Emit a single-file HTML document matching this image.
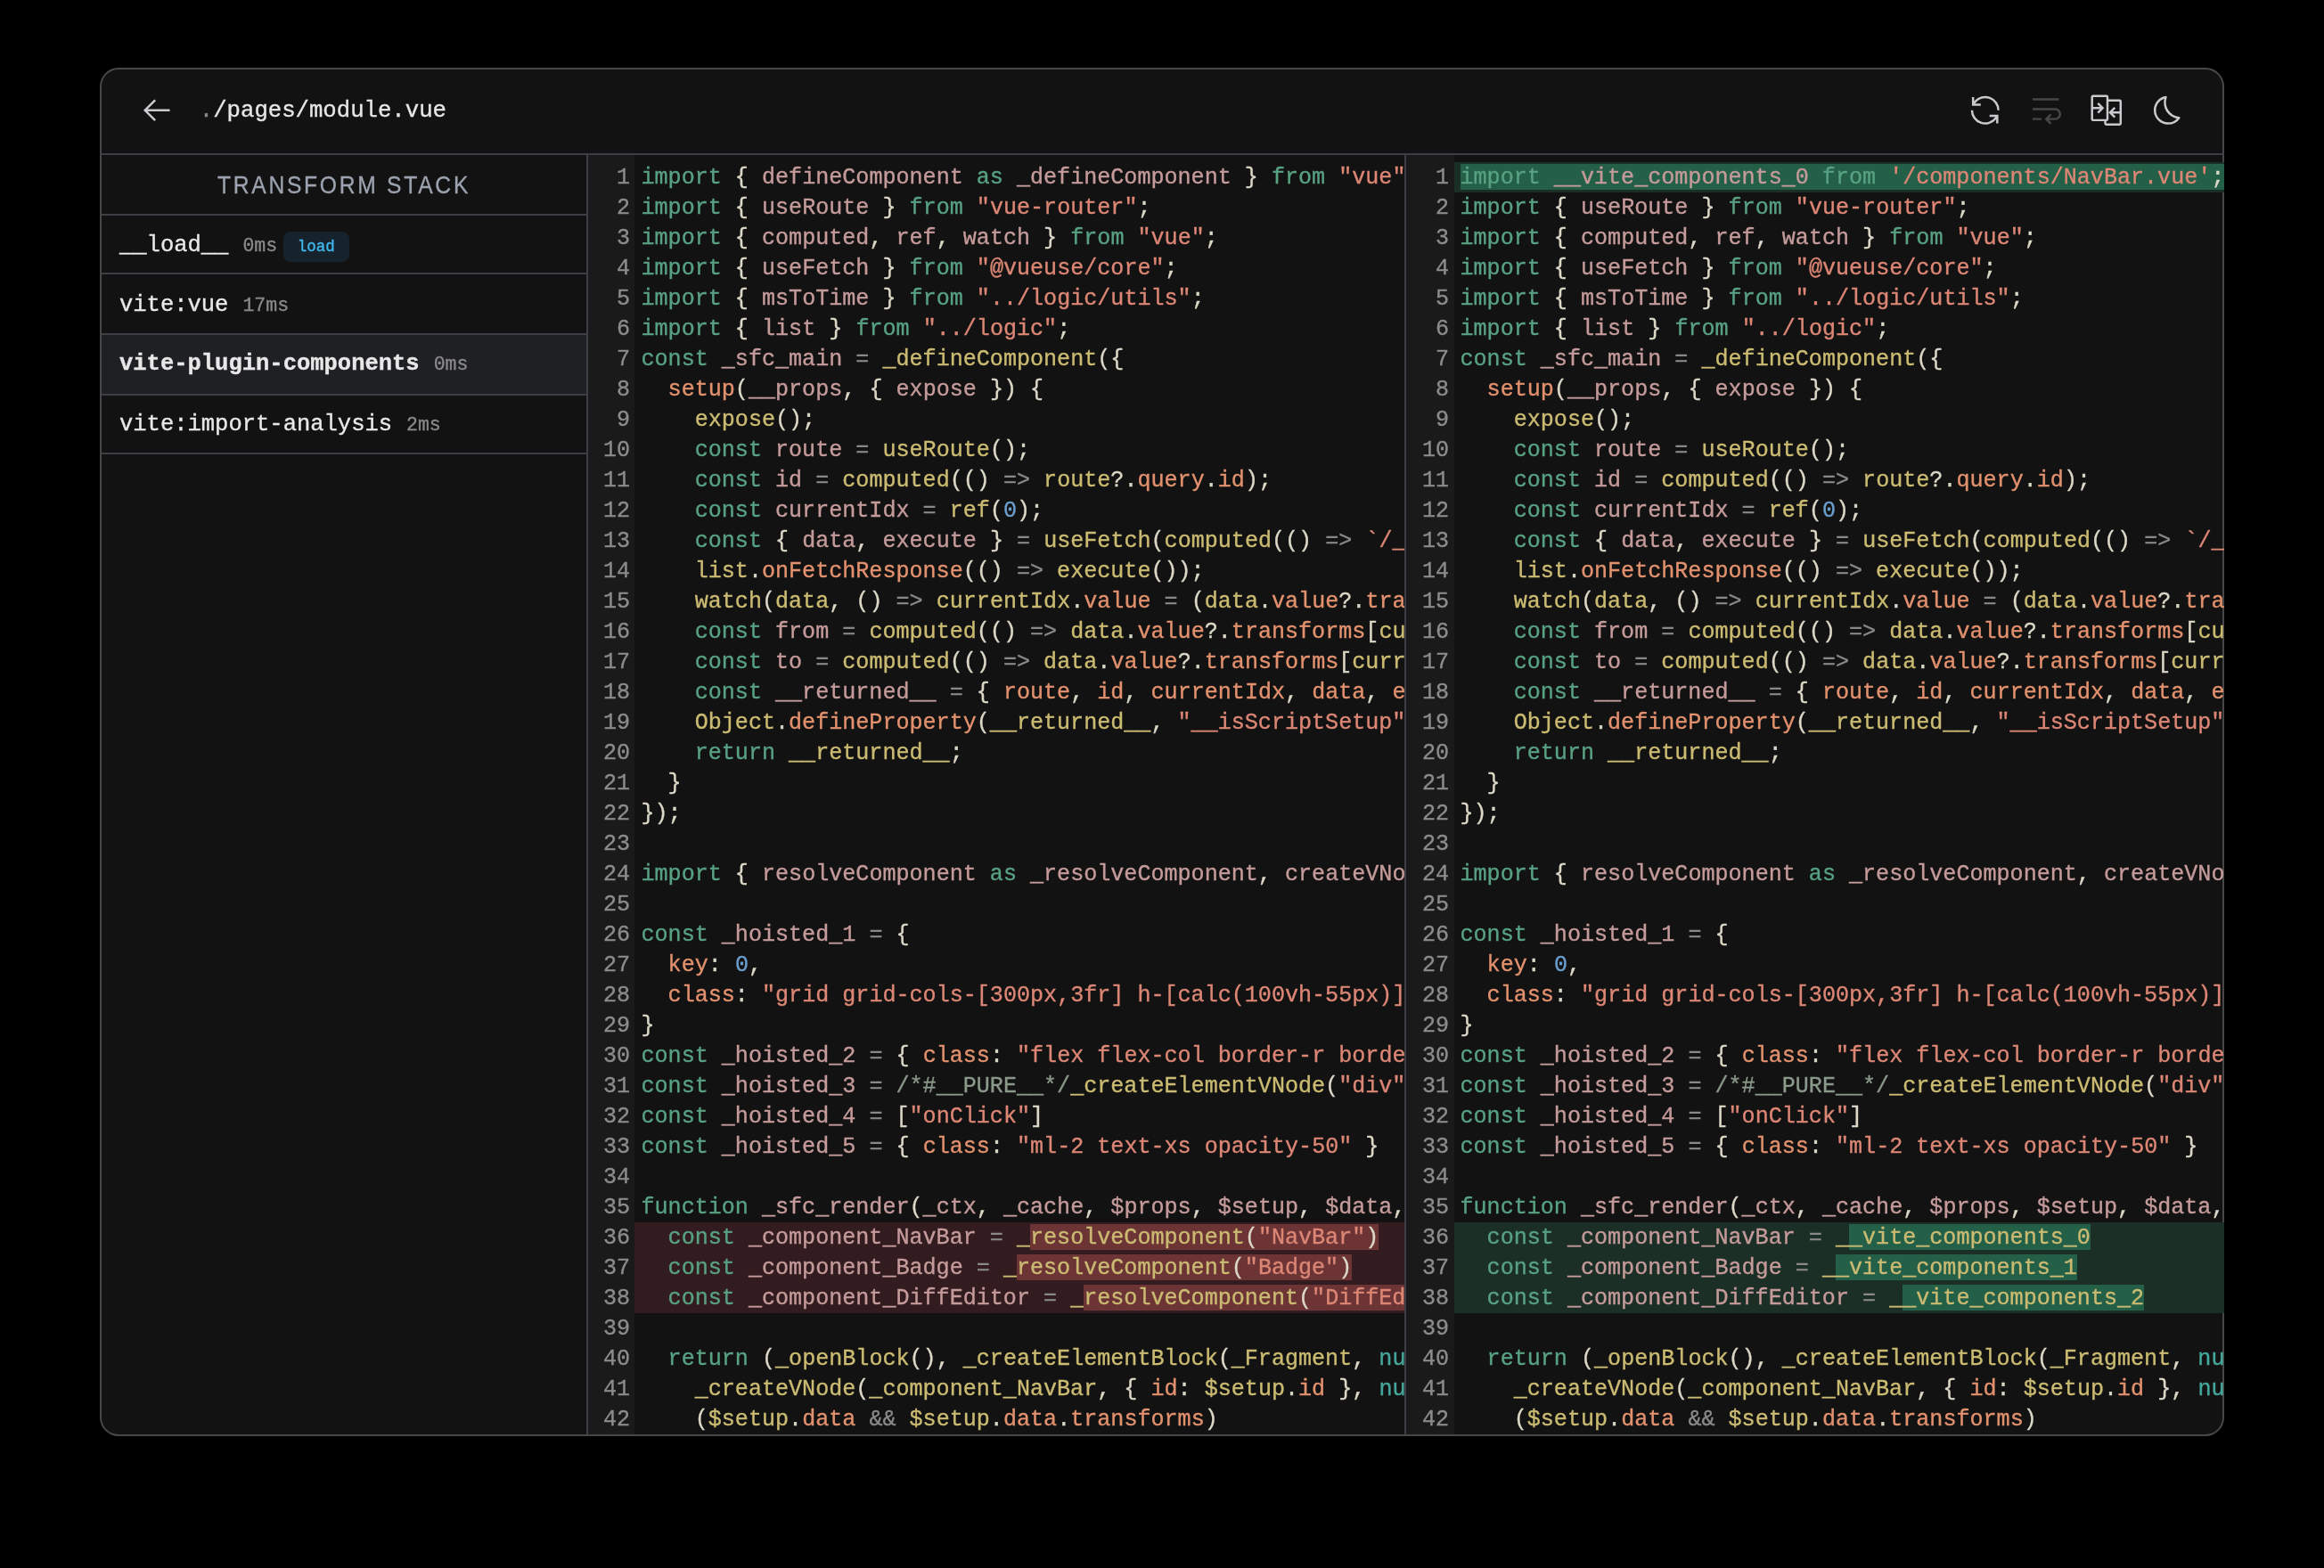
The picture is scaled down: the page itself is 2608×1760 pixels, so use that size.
<!DOCTYPE html>
<html><head><meta charset="utf-8"><title>vite-plugin-inspect</title>
<style>
html,body{margin:0;padding:0;background:#000;width:2608px;height:1760px;overflow:hidden}
body{position:relative;font-family:"Liberation Mono",monospace}
.win{position:absolute;left:112px;top:76px;width:2384px;height:1536px;border-radius:21px;overflow:hidden;background:#121212;box-shadow:inset 0 0 0 2px #474747}
.hdr{position:absolute;left:0;top:0;width:2384px;height:96px}
.ic{position:absolute;width:39.5px;height:39.5px;fill:#c9cacd;top:27.8px}
.back{left:44.4px;top:28.1px}
.i1{left:2095.7px}.i2{left:2164px;fill:#474747}.i3{left:2231.9px}.i4{left:2299.8px}
.path{position:absolute;left:111.8px;top:32.2px;font-size:25.67px;line-height:34px;color:#e6e6e6;white-space:pre}
.dim{color:#8a8a8a}
.hline{position:absolute;left:0;top:96px;width:2384px;height:2px;background:#3b3e43}
.vline{position:absolute;top:98px;width:2px;height:1436px;background:#3b3e43}
.side{position:absolute;left:2px;top:98px;width:544px;height:1436px}
.stitle{position:absolute;left:0;width:544px;text-align:center;top:16.5px;font-family:"Liberation Sans",sans-serif;font-size:28px;line-height:34px;color:#9ca3af;letter-spacing:3.1px;text-indent:0px;transform:scaleX(0.88);-webkit-text-stroke:0.35px currentColor}
.sl{position:absolute;left:0;width:544px;height:2px;background:#3b3e43}
.row{position:absolute;left:20px;white-space:pre;font-size:25.5px;line-height:34px;color:#e8e8e8}

.selbg{position:absolute;left:0;width:544px;background:#1f2023}
.r1{top:84.7px}.r2{top:151.8px}.r3{top:218.2px}.r4{top:285.6px}
.b{font-weight:bold}
.ms{font-size:21.5px;color:#8a8a8a;margin-left:16px}
.badge{display:inline-block;margin-left:6.5px;height:34px;line-height:34px;padding:0 16px;border-radius:8px;background:#17232c;color:#3fb8ec;font-size:17.5px;vertical-align:baseline}
.pane{position:absolute;top:98px;height:1436px;overflow:hidden}
.pl{left:548px;width:916px}
.pr{left:1466px;width:918px}
.gut{position:absolute;left:0;top:0;height:1436px;background:#1a1a1a;padding-top:9px;box-sizing:border-box;text-align:right;color:#8c8c8c;font-size:25.08px;line-height:34px}
.pl .gut{width:52px;padding-right:5px}
.pr .gut{width:54px;padding-right:6px}
.code{position:absolute;top:8px;right:0;font-size:25.08px;line-height:34px;white-space:pre;color:#dcd8c8}
.pl .code{left:52px}
.pr .code{left:54px}
.ln{height:34px;box-sizing:border-box;padding-top:1px;padding-left:7.5px;overflow:hidden}
.pr .ln{padding-left:6.5px}
.ln i{font-style:normal}
.del{background:#321c1f}
.add{background:#1b2f26}
.del .h{background:linear-gradient(#6d3436,#6d3436) 0 0/100% 29px no-repeat;padding-top:1px}
.add .h{background:linear-gradient(#245f48,#245f48) 0 0/100% 29px no-repeat;padding-top:1px}
.k{color:#58a183}
.d{color:#c49a9a}
.v{color:#cbbb72}
.r{color:#e2916e}
.s{color:#dc8675}
.n{color:#6b9fcf}
.o{color:#8a8a8a}
.p{color:#dcd8c8}
.c{color:#8a998a}
.a{color:#45a79b}
.code,.gut,.path,.row{-webkit-text-stroke:0.35px currentColor}
.win{will-change:transform}

</style></head>
<body>
<div class="win">
  <div class="hdr">
    <svg class="ic back" viewBox="0 0 32 32"><path d="M14 26l1.41-1.41L7.83 17H28v-2H7.83l7.58-7.59L14 6L4 16l10 10z"/></svg>
    <div class="path"><span class="dim">.</span>/pages/module.vue</div>
    <svg class="ic i1" viewBox="0 0 32 32"><path d="M12 10H6.78A11 11 0 0 1 27 16h2A13 13 0 0 0 6 7.68V4H4v8h8zm8 12h5.22A11 11 0 0 1 5 16H3a13 13 0 0 0 23 8.32V28h2v-8h-8z"/></svg>
    <svg class="ic i2" viewBox="0 0 32 32"><path d="M4 5h24v2H4zM4 23h8v2H4zM24.5 14H4v2h20.5a3.5 3.5 0 0 1 0 7h-5.67l2.58-2.59L20 19l-5 5l5 5l1.41-1.41L18.83 25h5.67a5.5 5.5 0 0 0 0-11z"/></svg>
    <svg class="ic i3" viewBox="0 0 32 32"><path d="M28 6H18V4a2 2 0 0 0-2-2H4a2 2 0 0 0-2 2v20a2 2 0 0 0 2 2h10v2a2 2 0 0 0 2 2h12a2 2 0 0 0 2-2V8a2 2 0 0 0-2-2zM4 15h6.17l-2.58 2.59L9 19l5-5l-5-5l-1.41 1.41L10.17 13H4V4h12v20H4zm12 13v-2a2 2 0 0 0 2-2V8h10v9h-6.17l2.58-2.59L23 13l-5 5l5 5l1.41-1.41L21.83 19H28v9z"/></svg>
    <svg class="ic i4" viewBox="0 0 32 32"><path d="M13.502 5.414a15.075 15.075 0 0 0 11.594 18.194a11.113 11.113 0 0 1-7.975 3.39c-.138 0-.278.005-.418 0a11.094 11.094 0 0 1-3.2-21.584M14.98 3a1.002 1.002 0 0 0-.175.016a13.096 13.096 0 0 0 1.825 25.981c.164.006.328 0 .49 0a13.072 13.072 0 0 0 10.703-5.555a1.01 1.01 0 0 0-.783-1.565A13.08 13.08 0 0 1 15.89 4.38A1.015 1.015 0 0 0 14.98 3z"/></svg>
  </div>
  <div class="hline"></div>
  <div class="side">
    <div class="stitle">TRANSFORM STACK</div>
    <div class="sl" style="top:66px"></div>
    <div class="row r1"><span class="nm">__load__</span><span class="ms">0ms</span><span class="badge">load</span></div>
    <div class="sl" style="top:132px"></div>
    <div class="row r2"><span class="nm">vite:vue</span><span class="ms">17ms</span></div>
    <div class="selbg" style="top:202px;height:66px"></div>
    <div class="sl" style="top:200px"></div>
    <div class="row r3 sel"><span class="nm b">vite-plugin-components</span><span class="ms">0ms</span></div>
    <div class="sl" style="top:268px"></div>
    <div class="row r4"><span class="nm">vite:import-analysis</span><span class="ms">2ms</span></div>
    <div class="sl" style="top:334px"></div>
  </div>
  <div class="vline" style="left:546px"></div>
  <div class="pane pl">
    <div class="gut"><div>1</div><div>2</div><div>3</div><div>4</div><div>5</div><div>6</div><div>7</div><div>8</div><div>9</div><div>10</div><div>11</div><div>12</div><div>13</div><div>14</div><div>15</div><div>16</div><div>17</div><div>18</div><div>19</div><div>20</div><div>21</div><div>22</div><div>23</div><div>24</div><div>25</div><div>26</div><div>27</div><div>28</div><div>29</div><div>30</div><div>31</div><div>32</div><div>33</div><div>34</div><div>35</div><div>36</div><div>37</div><div>38</div><div>39</div><div>40</div><div>41</div><div>42</div></div>
    <div class="code"><div class="ln"><i class="k">import</i> <i class="p">{</i> <i class="d">defineComponent</i> <i class="k">as</i> <i class="d">_defineComponent</i> <i class="p">}</i> <i class="k">from</i> <i class="s">"vue"</i><i class="p">;</i></div><div class="ln"><i class="k">import</i> <i class="p">{</i> <i class="d">useRoute</i> <i class="p">}</i> <i class="k">from</i> <i class="s">"vue-router"</i><i class="p">;</i></div><div class="ln"><i class="k">import</i> <i class="p">{</i> <i class="d">computed</i><i class="p">,</i> <i class="d">ref</i><i class="p">,</i> <i class="d">watch</i> <i class="p">}</i> <i class="k">from</i> <i class="s">"vue"</i><i class="p">;</i></div><div class="ln"><i class="k">import</i> <i class="p">{</i> <i class="d">useFetch</i> <i class="p">}</i> <i class="k">from</i> <i class="s">"@vueuse/core"</i><i class="p">;</i></div><div class="ln"><i class="k">import</i> <i class="p">{</i> <i class="d">msToTime</i> <i class="p">}</i> <i class="k">from</i> <i class="s">"../logic/utils"</i><i class="p">;</i></div><div class="ln"><i class="k">import</i> <i class="p">{</i> <i class="d">list</i> <i class="p">}</i> <i class="k">from</i> <i class="s">"../logic"</i><i class="p">;</i></div><div class="ln"><i class="k">const</i> <i class="d">_sfc_main</i> <i class="o">=</i> <i class="v">_defineComponent</i><i class="p">({</i></div><div class="ln">  <i class="r">setup</i><i class="p">(</i><i class="d">__props</i><i class="p">,</i> <i class="p">{</i> <i class="d">expose</i> <i class="p">})</i> <i class="p">{</i></div><div class="ln">    <i class="v">expose</i><i class="p">();</i></div><div class="ln">    <i class="k">const</i> <i class="d">route</i> <i class="o">=</i> <i class="v">useRoute</i><i class="p">();</i></div><div class="ln">    <i class="k">const</i> <i class="d">id</i> <i class="o">=</i> <i class="v">computed</i><i class="p">(()</i> <i class="o">=&gt;</i> <i class="v">route</i><i class="p">?.</i><i class="r">query</i><i class="p">.</i><i class="r">id</i><i class="p">);</i></div><div class="ln">    <i class="k">const</i> <i class="d">currentIdx</i> <i class="o">=</i> <i class="v">ref</i><i class="p">(</i><i class="n">0</i><i class="p">);</i></div><div class="ln">    <i class="k">const</i> <i class="p">{</i> <i class="d">data</i><i class="p">,</i> <i class="d">execute</i> <i class="p">}</i> <i class="o">=</i> <i class="v">useFetch</i><i class="p">(</i><i class="v">computed</i><i class="p">(()</i> <i class="o">=&gt;</i> <i class="s">`/__inspect_api/id/${encodeURIComponent(id.value)}`</i><i class="p">));</i></div><div class="ln">    <i class="v">list</i><i class="p">.</i><i class="r">onFetchResponse</i><i class="p">(()</i> <i class="o">=&gt;</i> <i class="v">execute</i><i class="p">());</i></div><div class="ln">    <i class="v">watch</i><i class="p">(</i><i class="v">data</i><i class="p">,</i> <i class="p">()</i> <i class="o">=&gt;</i> <i class="v">currentIdx</i><i class="p">.</i><i class="r">value</i> <i class="o">=</i> <i class="p">(</i><i class="v">data</i><i class="p">.</i><i class="r">value</i><i class="p">?.</i><i class="r">transforms</i><i class="p">.</i><i class="r">length</i> <i class="o">||</i> <i class="n">1</i><i class="p">)</i> <i class="o">-</i> <i class="n">1</i><i class="p">);</i></div><div class="ln">    <i class="k">const</i> <i class="d">from</i> <i class="o">=</i> <i class="v">computed</i><i class="p">(()</i> <i class="o">=&gt;</i> <i class="v">data</i><i class="p">.</i><i class="r">value</i><i class="p">?.</i><i class="r">transforms</i><i class="p">[</i><i class="v">currentIdx</i><i class="p">.</i><i class="r">value</i> <i class="o">-</i> <i class="n">1</i><i class="p">]?.</i><i class="r">result</i> <i class="o">||</i> <i class="s">""</i><i class="p">);</i></div><div class="ln">    <i class="k">const</i> <i class="d">to</i> <i class="o">=</i> <i class="v">computed</i><i class="p">(()</i> <i class="o">=&gt;</i> <i class="v">data</i><i class="p">.</i><i class="r">value</i><i class="p">?.</i><i class="r">transforms</i><i class="p">[</i><i class="v">currentIdx</i><i class="p">.</i><i class="r">value</i><i class="p">]?.</i><i class="r">result</i> <i class="o">||</i> <i class="s">""</i><i class="p">);</i></div><div class="ln">    <i class="k">const</i> <i class="d">__returned__</i> <i class="o">=</i> <i class="p">{</i> <i class="r">route</i><i class="p">,</i> <i class="r">id</i><i class="p">,</i> <i class="r">currentIdx</i><i class="p">,</i> <i class="r">data</i><i class="p">,</i> <i class="r">execute</i><i class="p">,</i> <i class="k">from</i><i class="p">,</i> <i class="r">to</i> <i class="p">};</i></div><div class="ln">    <i class="v">Object</i><i class="p">.</i><i class="r">defineProperty</i><i class="p">(</i><i class="v">__returned__</i><i class="p">,</i> <i class="s">"__isScriptSetup"</i><i class="p">,</i> <i class="p">{</i> <i class="r">enumerable</i><i class="p">:</i> <i class="a">false</i><i class="p">,</i> <i class="r">value</i><i class="p">:</i> <i class="a">true</i> <i class="p">});</i></div><div class="ln">    <i class="k">return</i> <i class="v">__returned__</i><i class="p">;</i></div><div class="ln">  <i class="p">}</i></div><div class="ln"><i class="p">});</i></div><div class="ln"></div><div class="ln"><i class="k">import</i> <i class="p">{</i> <i class="d">resolveComponent</i> <i class="k">as</i> <i class="d">_resolveComponent</i><i class="p">,</i> <i class="d">createVNode</i> <i class="k">as</i> <i class="d">_createVNode</i><i class="p">,</i> <i class="d">createElementVNode</i> <i class="k">as</i> <i class="d">_createElementVNode</i> <i class="p">}</i></div><div class="ln"></div><div class="ln"><i class="k">const</i> <i class="d">_hoisted_1</i> <i class="o">=</i> <i class="p">{</i></div><div class="ln">  <i class="r">key</i><i class="p">:</i> <i class="n">0</i><i class="p">,</i></div><div class="ln">  <i class="r">class</i><i class="p">:</i> <i class="s">"grid</i> <i class="s">grid-cols-[300px,3fr]</i> <i class="s">h-[calc(100vh-55px)]"</i></div><div class="ln"><i class="p">}</i></div><div class="ln"><i class="k">const</i> <i class="d">_hoisted_2</i> <i class="o">=</i> <i class="p">{</i> <i class="r">class</i><i class="p">:</i> <i class="s">"flex</i> <i class="s">flex-col</i> <i class="s">border-r</i> <i class="s">border-main"</i> <i class="p">}</i></div><div class="ln"><i class="k">const</i> <i class="d">_hoisted_3</i> <i class="o">=</i> <i class="c">/*#__PURE__*/</i><i class="v">_createElementVNode</i><i class="p">(</i><i class="s">"div"</i><i class="p">,</i> <i class="p">{</i> <i class="r">class</i><i class="p">:</i> <i class="s">"px-2</i> <i class="s">py-1</i> <i class="s">text-sm"</i> <i class="p">},</i> <i class="s">"Transform</i> <i class="s">Stack"</i><i class="p">,</i> <i class="o">-</i><i class="n">1</i><i class="p">)</i></div><div class="ln"><i class="k">const</i> <i class="d">_hoisted_4</i> <i class="o">=</i> <i class="p">[</i><i class="s">"onClick"</i><i class="p">]</i></div><div class="ln"><i class="k">const</i> <i class="d">_hoisted_5</i> <i class="o">=</i> <i class="p">{</i> <i class="r">class</i><i class="p">:</i> <i class="s">"ml-2</i> <i class="s">text-xs</i> <i class="s">opacity-50"</i> <i class="p">}</i></div><div class="ln"></div><div class="ln"><i class="k">function</i> <i class="d">_sfc_render</i><i class="p">(</i><i class="d">_ctx</i><i class="p">,</i> <i class="d">_cache</i><i class="p">,</i> <i class="d">$props</i><i class="p">,</i> <i class="d">$setup</i><i class="p">,</i> <i class="d">$data</i><i class="p">,</i> <i class="d">$options</i><i class="p">)</i> <i class="p">{</i></div><div class="ln del">  <i class="k">const</i> <i class="d">_component_NavBar</i> <i class="o">=</i> <i class="v">_</i><i class="v h">resolveComponent</i><i class="p h">(</i><i class="s h">"NavBar"</i><i class="p h">)</i></div><div class="ln del">  <i class="k">const</i> <i class="d">_component_Badge</i> <i class="o">=</i> <i class="v">_</i><i class="v h">resolveComponent</i><i class="p h">(</i><i class="s h">"Badge"</i><i class="p h">)</i></div><div class="ln del">  <i class="k">const</i> <i class="d">_component_DiffEditor</i> <i class="o">=</i> <i class="v">_</i><i class="v h">resolveComponent</i><i class="p h">(</i><i class="s h">"DiffEditor"</i><i class="p h">)</i></div><div class="ln"></div><div class="ln">  <i class="k">return</i> <i class="p">(</i><i class="v">_openBlock</i><i class="p">(),</i> <i class="v">_createElementBlock</i><i class="p">(</i><i class="v">_Fragment</i><i class="p">,</i> <i class="a">null</i><i class="p">,</i> <i class="p">[</i></div><div class="ln">    <i class="v">_createVNode</i><i class="p">(</i><i class="v">_component_NavBar</i><i class="p">,</i> <i class="p">{</i> <i class="r">id</i><i class="p">:</i> <i class="v">$setup</i><i class="p">.</i><i class="r">id</i> <i class="p">},</i> <i class="a">null</i><i class="p">,</i> <i class="n">8</i><i class="p">,</i> <i class="p">[</i><i class="s">"id"</i><i class="p">]),</i></div><div class="ln">    <i class="p">(</i><i class="v">$setup</i><i class="p">.</i><i class="r">data</i> <i class="o">&amp;&amp;</i> <i class="v">$setup</i><i class="p">.</i><i class="r">data</i><i class="p">.</i><i class="r">transforms</i><i class="p">)</i></div></div>
  </div>
  <div class="vline" style="left:1464px"></div>
  <div class="pane pr">
    <div class="gut"><div>1</div><div>2</div><div>3</div><div>4</div><div>5</div><div>6</div><div>7</div><div>8</div><div>9</div><div>10</div><div>11</div><div>12</div><div>13</div><div>14</div><div>15</div><div>16</div><div>17</div><div>18</div><div>19</div><div>20</div><div>21</div><div>22</div><div>23</div><div>24</div><div>25</div><div>26</div><div>27</div><div>28</div><div>29</div><div>30</div><div>31</div><div>32</div><div>33</div><div>34</div><div>35</div><div>36</div><div>37</div><div>38</div><div>39</div><div>40</div><div>41</div><div>42</div></div>
    <div class="code"><div class="ln add"><i class="k h">import</i><i class="h"> </i><i class="d h">__vite_components_0</i><i class="h"> </i><i class="k h">from</i><i class="h"> </i><i class="s h">'/components/NavBar.vue'</i><i class="p h">;</i></div><div class="ln"><i class="k">import</i> <i class="p">{</i> <i class="d">useRoute</i> <i class="p">}</i> <i class="k">from</i> <i class="s">"vue-router"</i><i class="p">;</i></div><div class="ln"><i class="k">import</i> <i class="p">{</i> <i class="d">computed</i><i class="p">,</i> <i class="d">ref</i><i class="p">,</i> <i class="d">watch</i> <i class="p">}</i> <i class="k">from</i> <i class="s">"vue"</i><i class="p">;</i></div><div class="ln"><i class="k">import</i> <i class="p">{</i> <i class="d">useFetch</i> <i class="p">}</i> <i class="k">from</i> <i class="s">"@vueuse/core"</i><i class="p">;</i></div><div class="ln"><i class="k">import</i> <i class="p">{</i> <i class="d">msToTime</i> <i class="p">}</i> <i class="k">from</i> <i class="s">"../logic/utils"</i><i class="p">;</i></div><div class="ln"><i class="k">import</i> <i class="p">{</i> <i class="d">list</i> <i class="p">}</i> <i class="k">from</i> <i class="s">"../logic"</i><i class="p">;</i></div><div class="ln"><i class="k">const</i> <i class="d">_sfc_main</i> <i class="o">=</i> <i class="v">_defineComponent</i><i class="p">({</i></div><div class="ln">  <i class="r">setup</i><i class="p">(</i><i class="d">__props</i><i class="p">,</i> <i class="p">{</i> <i class="d">expose</i> <i class="p">})</i> <i class="p">{</i></div><div class="ln">    <i class="v">expose</i><i class="p">();</i></div><div class="ln">    <i class="k">const</i> <i class="d">route</i> <i class="o">=</i> <i class="v">useRoute</i><i class="p">();</i></div><div class="ln">    <i class="k">const</i> <i class="d">id</i> <i class="o">=</i> <i class="v">computed</i><i class="p">(()</i> <i class="o">=&gt;</i> <i class="v">route</i><i class="p">?.</i><i class="r">query</i><i class="p">.</i><i class="r">id</i><i class="p">);</i></div><div class="ln">    <i class="k">const</i> <i class="d">currentIdx</i> <i class="o">=</i> <i class="v">ref</i><i class="p">(</i><i class="n">0</i><i class="p">);</i></div><div class="ln">    <i class="k">const</i> <i class="p">{</i> <i class="d">data</i><i class="p">,</i> <i class="d">execute</i> <i class="p">}</i> <i class="o">=</i> <i class="v">useFetch</i><i class="p">(</i><i class="v">computed</i><i class="p">(()</i> <i class="o">=&gt;</i> <i class="s">`/__inspect_api/id/${encodeURIComponent(id.value)}`</i><i class="p">));</i></div><div class="ln">    <i class="v">list</i><i class="p">.</i><i class="r">onFetchResponse</i><i class="p">(()</i> <i class="o">=&gt;</i> <i class="v">execute</i><i class="p">());</i></div><div class="ln">    <i class="v">watch</i><i class="p">(</i><i class="v">data</i><i class="p">,</i> <i class="p">()</i> <i class="o">=&gt;</i> <i class="v">currentIdx</i><i class="p">.</i><i class="r">value</i> <i class="o">=</i> <i class="p">(</i><i class="v">data</i><i class="p">.</i><i class="r">value</i><i class="p">?.</i><i class="r">transforms</i><i class="p">.</i><i class="r">length</i> <i class="o">||</i> <i class="n">1</i><i class="p">)</i> <i class="o">-</i> <i class="n">1</i><i class="p">);</i></div><div class="ln">    <i class="k">const</i> <i class="d">from</i> <i class="o">=</i> <i class="v">computed</i><i class="p">(()</i> <i class="o">=&gt;</i> <i class="v">data</i><i class="p">.</i><i class="r">value</i><i class="p">?.</i><i class="r">transforms</i><i class="p">[</i><i class="v">currentIdx</i><i class="p">.</i><i class="r">value</i> <i class="o">-</i> <i class="n">1</i><i class="p">]?.</i><i class="r">result</i> <i class="o">||</i> <i class="s">""</i><i class="p">);</i></div><div class="ln">    <i class="k">const</i> <i class="d">to</i> <i class="o">=</i> <i class="v">computed</i><i class="p">(()</i> <i class="o">=&gt;</i> <i class="v">data</i><i class="p">.</i><i class="r">value</i><i class="p">?.</i><i class="r">transforms</i><i class="p">[</i><i class="v">currentIdx</i><i class="p">.</i><i class="r">value</i><i class="p">]?.</i><i class="r">result</i> <i class="o">||</i> <i class="s">""</i><i class="p">);</i></div><div class="ln">    <i class="k">const</i> <i class="d">__returned__</i> <i class="o">=</i> <i class="p">{</i> <i class="r">route</i><i class="p">,</i> <i class="r">id</i><i class="p">,</i> <i class="r">currentIdx</i><i class="p">,</i> <i class="r">data</i><i class="p">,</i> <i class="r">execute</i><i class="p">,</i> <i class="k">from</i><i class="p">,</i> <i class="r">to</i> <i class="p">};</i></div><div class="ln">    <i class="v">Object</i><i class="p">.</i><i class="r">defineProperty</i><i class="p">(</i><i class="v">__returned__</i><i class="p">,</i> <i class="s">"__isScriptSetup"</i><i class="p">,</i> <i class="p">{</i> <i class="r">enumerable</i><i class="p">:</i> <i class="a">false</i><i class="p">,</i> <i class="r">value</i><i class="p">:</i> <i class="a">true</i> <i class="p">});</i></div><div class="ln">    <i class="k">return</i> <i class="v">__returned__</i><i class="p">;</i></div><div class="ln">  <i class="p">}</i></div><div class="ln"><i class="p">});</i></div><div class="ln"></div><div class="ln"><i class="k">import</i> <i class="p">{</i> <i class="d">resolveComponent</i> <i class="k">as</i> <i class="d">_resolveComponent</i><i class="p">,</i> <i class="d">createVNode</i> <i class="k">as</i> <i class="d">_createVNode</i><i class="p">,</i> <i class="d">createElementVNode</i> <i class="k">as</i> <i class="d">_createElementVNode</i> <i class="p">}</i></div><div class="ln"></div><div class="ln"><i class="k">const</i> <i class="d">_hoisted_1</i> <i class="o">=</i> <i class="p">{</i></div><div class="ln">  <i class="r">key</i><i class="p">:</i> <i class="n">0</i><i class="p">,</i></div><div class="ln">  <i class="r">class</i><i class="p">:</i> <i class="s">"grid</i> <i class="s">grid-cols-[300px,3fr]</i> <i class="s">h-[calc(100vh-55px)]"</i></div><div class="ln"><i class="p">}</i></div><div class="ln"><i class="k">const</i> <i class="d">_hoisted_2</i> <i class="o">=</i> <i class="p">{</i> <i class="r">class</i><i class="p">:</i> <i class="s">"flex</i> <i class="s">flex-col</i> <i class="s">border-r</i> <i class="s">border-main"</i> <i class="p">}</i></div><div class="ln"><i class="k">const</i> <i class="d">_hoisted_3</i> <i class="o">=</i> <i class="c">/*#__PURE__*/</i><i class="v">_createElementVNode</i><i class="p">(</i><i class="s">"div"</i><i class="p">,</i> <i class="p">{</i> <i class="r">class</i><i class="p">:</i> <i class="s">"px-2</i> <i class="s">py-1</i> <i class="s">text-sm"</i> <i class="p">},</i> <i class="s">"Transform</i> <i class="s">Stack"</i><i class="p">,</i> <i class="o">-</i><i class="n">1</i><i class="p">)</i></div><div class="ln"><i class="k">const</i> <i class="d">_hoisted_4</i> <i class="o">=</i> <i class="p">[</i><i class="s">"onClick"</i><i class="p">]</i></div><div class="ln"><i class="k">const</i> <i class="d">_hoisted_5</i> <i class="o">=</i> <i class="p">{</i> <i class="r">class</i><i class="p">:</i> <i class="s">"ml-2</i> <i class="s">text-xs</i> <i class="s">opacity-50"</i> <i class="p">}</i></div><div class="ln"></div><div class="ln"><i class="k">function</i> <i class="d">_sfc_render</i><i class="p">(</i><i class="d">_ctx</i><i class="p">,</i> <i class="d">_cache</i><i class="p">,</i> <i class="d">$props</i><i class="p">,</i> <i class="d">$setup</i><i class="p">,</i> <i class="d">$data</i><i class="p">,</i> <i class="d">$options</i><i class="p">)</i> <i class="p">{</i></div><div class="ln add">  <i class="k">const</i> <i class="d">_component_NavBar</i> <i class="o">=</i> <i class="v">_</i><i class="v h">_vite_components_0</i></div><div class="ln add">  <i class="k">const</i> <i class="d">_component_Badge</i> <i class="o">=</i> <i class="v">_</i><i class="v h">_vite_components_1</i></div><div class="ln add">  <i class="k">const</i> <i class="d">_component_DiffEditor</i> <i class="o">=</i> <i class="v">_</i><i class="v h">_vite_components_2</i></div><div class="ln"></div><div class="ln">  <i class="k">return</i> <i class="p">(</i><i class="v">_openBlock</i><i class="p">(),</i> <i class="v">_createElementBlock</i><i class="p">(</i><i class="v">_Fragment</i><i class="p">,</i> <i class="a">null</i><i class="p">,</i> <i class="p">[</i></div><div class="ln">    <i class="v">_createVNode</i><i class="p">(</i><i class="v">_component_NavBar</i><i class="p">,</i> <i class="p">{</i> <i class="r">id</i><i class="p">:</i> <i class="v">$setup</i><i class="p">.</i><i class="r">id</i> <i class="p">},</i> <i class="a">null</i><i class="p">,</i> <i class="n">8</i><i class="p">,</i> <i class="p">[</i><i class="s">"id"</i><i class="p">]),</i></div><div class="ln">    <i class="p">(</i><i class="v">$setup</i><i class="p">.</i><i class="r">data</i> <i class="o">&amp;&amp;</i> <i class="v">$setup</i><i class="p">.</i><i class="r">data</i><i class="p">.</i><i class="r">transforms</i><i class="p">)</i></div></div>
  </div>
</div>
</body></html>
